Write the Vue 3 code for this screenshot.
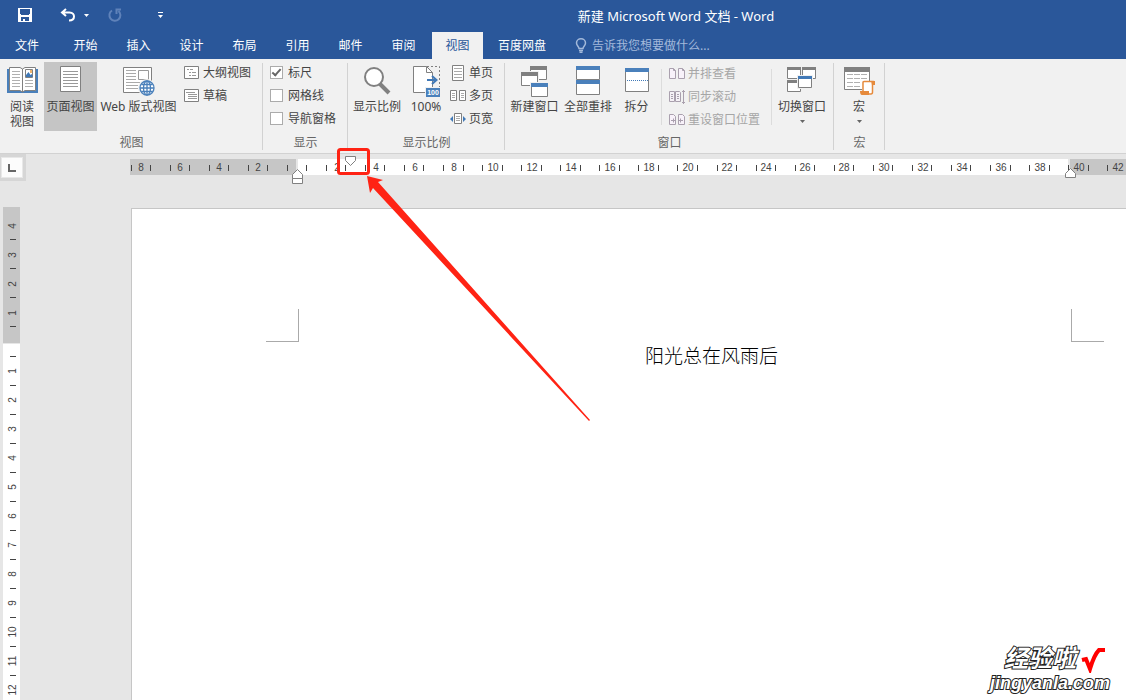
<script setup>
import { ref } from 'vue'

const tabs = ['开始', '插入', '设计', '布局', '引用', '邮件', '审阅', '视图', '百度网盘']
const activeTab = ref('视图')
const search = ref('')
const showOptions = ref([
  { id: 'ruler', label: '标尺', on: true },
  { id: 'grid', label: '网格线', on: false },
  { id: 'nav', label: '导航窗格', on: false },
])

// Horizontal ruler: labels every two characters, ticks half way between.
const ZERO_X = 167.5
const STEP_X = 39.07
const hMarks = []
const hTicks = []
const hLast = Math.floor((window.innerWidth - 130 - ZERO_X - 6) / STEP_X)
for (let i = -4; i <= hLast; i++) {
  if (i !== 0) hMarks.push({ x: Math.round(ZERO_X + i * STEP_X), label: Math.abs(i * 2) })
  for (const side of [-0.25, 0.25]) hTicks.push(Math.floor(ZERO_X + (i + side) * STEP_X - 0.5))
}
hTicks[0] = 1

// Vertical ruler: labels every unit.
const ZERO_Y = 135
const STEP_Y = 29
const vMarks = []
const vTicks = []
const vLast = Math.floor((window.innerHeight - 207 - ZERO_Y - 6) / STEP_Y)
for (let i = -4; i <= vLast; i++) {
  if (i !== 0) vMarks.push({ y: Math.round(ZERO_Y + i * STEP_Y), label: Math.abs(i) })
  const y = ZERO_Y + (i - 0.5) * STEP_Y - 1
  if (i !== -4) vTicks.push(i > 0 ? Math.ceil(y) : Math.floor(y))
}
</script>

<template>
  <div class="app">
    <header class="top">
      <div class="titlebar">
        <div class="quick">
          <button class="q-save" aria-label="保存">
            <svg width="14" height="14" viewBox="0 0 14 14" shape-rendering="crispEdges">
              <path fill="#fff" fill-rule="evenodd" d="M0 0h14v14H0zM2 1v5h1v1h8V6h1V1zM3 9v4h2v-2h2v2h4V9z" />
            </svg>
          </button>
          <button class="q-undo" aria-label="撤消">
            <svg width="16" height="14" viewBox="0 0 16 14" fill="none" stroke="#fff" stroke-width="2">
              <path d="M6 1L2 4.500L6 8M2.500 4.500H9.500C13 4.500 14 7 14 8.500C14 11 12 12.500 9 12.500" />
            </svg>
          </button>
          <button class="q-more" aria-label="撤消列表">
            <svg width="5" height="3"><path d="M0 0h5L2.500 3z" fill="#fff" /></svg>
          </button>
          <button class="q-redo" aria-label="重复">
            <svg width="14" height="14" viewBox="0 0 14 14" fill="none" stroke="#5f82b9" stroke-width="2">
              <path d="M4 2.500A5.500 5.500 0 1 0 10.500 3M8.500 6V1.500H13" />
            </svg>
          </button>
          <button class="q-custom" aria-label="自定义快速访问工具栏">
            <svg width="5" height="6"><path d="M0 0h5v1H0zM0 3h5L2.500 6z" fill="#fff" /></svg>
          </button>
        </div>
        <h1 class="title">新建 Microsoft Word 文档 - Word</h1>
      </div>
      <nav class="tabs">
        <button class="tab file">文件</button>
        <button
          v-for="tab in tabs"
          :key="tab"
          class="tab"
          :class="{ active: tab === activeTab, wide: tab.length > 2 }"
          @click="activeTab = tab"
        >{{ tab }}</button>
        <label class="tell">
          <svg width="12" height="15" viewBox="0 0 12 15" fill="none" stroke="#a3b9da" stroke-width="1.500">
            <path d="M4 10.500C4 8.500 1.500 7.800 1.500 5A4.500 4.200 0 0 1 10.500 5C10.500 7.800 8 8.500 8 10.500zM4 12.500H8M4.500 14.200H7.500" />
          </svg>
          <input v-model="search" type="text" aria-label="告诉我您想要做什么" placeholder="告诉我您想要做什么..." />
        </label>
      </nav>
    </header>

    <section class="ribbon">
      <div class="group views">
        <div class="body">
          <button class="big read">
            <span class="pic">
              <svg width="31" height="27" viewBox="0 0 31 27">
                <path d="M0 3h31v24H0z" fill="#4a80bb" />
                <path d="M2.500 1.500H13L15.500 3L18 1.500H28.500V24.500H18L15.500 26L13 24.500H2.500z" fill="#fff" stroke="#808080" />
                <path d="M15.500 3V26" stroke="#808080" />
                <path d="M5 5.500h8M5 8.500h8M5 11.500h8M5 14.500h8M5 17.500h8M5 20.500h8M18 14.500h8M18 17.500h8M18 20.500h8" stroke="#b0b0b0" />
                <path d="M18.500 3.500h7v8h-7z" fill="#fff" stroke="#808080" />
                <path d="M19 11V9l2.500-3 2 3 1-1 1 1v2z" fill="#3f77b5" />
                <path d="M23 4h2v3h-2z" fill="#efb46c" />
              </svg>
            </span>
            <span>阅读<br />视图</span>
          </button>
          <button class="big pageview selected">
            <span class="pic">
              <svg width="21" height="27" viewBox="0 0 21 27">
                <path d="M.5 .5h20v25H.5z" fill="#fff" stroke="#808080" />
                <path d="M3 5.500h15M3 8.500h15M3 11.500h15M3 14.500h15M3 17.500h15M3 20.500h15" stroke="#999" />
              </svg>
            </span>
            <span>页面视图</span>
          </button>
          <button class="big web">
            <span class="pic">
              <svg width="32" height="30" viewBox="0 0 32 30">
                <path d="M.5 1.500h28v25H.5z" fill="#fff" stroke="#808080" />
                <path d="M3 4.500h10M3 7.500h10M3 10.500h10M3 13.500h10M3 16.500h14M3 19.500h12M3 22.500h12" stroke="#aaa" />
                <path d="M15.500 4.500h10v9h-10z" fill="#fff" stroke="#999" />
                <circle cx="24" cy="22" r="9" fill="#f1f1f1" />
                <g fill="#fff" stroke="#4a80bb" stroke-width="1.300">
                  <circle cx="24" cy="22" r="7" />
                  <ellipse cx="24" cy="22" rx="3.500" ry="7" />
                  <path d="M24 15v14M17 22h14M18.500 18.500h11M18.500 25.500h11" />
                </g>
              </svg>
            </span>
            <span>Web 版式视图</span>
          </button>
          <div class="list">
            <button class="small">
              <svg width="16" height="13" viewBox="0 0 16 13" fill="none">
                <path d="M.5 .5h14v12H.5z" fill="#fff" stroke="#808080" />
                <path d="M3 3.500h2M6 3.500h3M5 6.500h2M8 6.500h4M5 9.500h2M8 9.500h4" stroke="#999" />
              </svg>大纲视图
            </button>
            <button class="small">
              <svg width="16" height="13" viewBox="0 0 16 13" fill="none">
                <path d="M.5 .5h14v12H.5z" fill="#fff" stroke="#808080" />
                <path d="M2 3.500h9M4 5.500h9M4 7.500h9M4 9.500h9" stroke="#999" />
              </svg>草稿
            </button>
          </div>
        </div>
        <div class="caption">视图</div>
      </div>

      <div class="group show">
        <div class="body">
          <div class="list">
            <label v-for="opt in showOptions" :key="opt.id" class="check">
              <input v-model="opt.on" type="checkbox" />{{ opt.label }}
            </label>
          </div>
        </div>
        <div class="caption">显示</div>
      </div>

      <div class="group zoom">
        <div class="body">
          <button class="big zoombtn">
            <span class="pic">
              <svg width="28" height="29" viewBox="0 0 28 29">
                <path d="M16 17L26 27" stroke="#808080" stroke-width="4" />
                <circle cx="11" cy="11" r="9" fill="#fff" stroke="#808080" stroke-width="2" />
              </svg>
            </span>
            <span>显示比例</span>
          </button>
          <button class="big hundred">
            <span class="pic">
              <svg width="27" height="32" viewBox="0 0 27 32">
                <path d="M14 .5h12.500V22" fill="none" stroke="#808080" stroke-dasharray="2 2" />
                <path d="M.5 .5h13l6 6v20H.5z" fill="#fff" stroke="#808080" />
                <path d="M13.500 .5v6h6" fill="none" stroke="#808080" />
                <path d="M14 14h9M19 10l4.500 4L19 18" fill="none" stroke="#4179b7" stroke-width="2" />
                <path d="M12 21h15v11H12z" fill="#f1f1f1" />
                <path d="M13 22h14v9H13z" fill="#4a80bb" />
                <text x="20" y="29" class="badge">100</text>
              </svg>
            </span>
            <span>100%</span>
          </button>
          <div class="list">
            <button class="small">
              <svg width="16" height="16" viewBox="0 0 16 16">
                <path d="M2.500 .5h11v15h-11z" fill="#fff" stroke="#808080" />
                <path d="M4 3.500h8M4 6.500h8M4 9.500h8M4 12.500h8" stroke="#aaa" />
              </svg>单页
            </button>
            <button class="small">
              <svg width="16" height="12" viewBox="0 0 16 12">
                <path d="M.5 .5h6v10h-6zM9.500 .5h6v10h-6z" fill="#fff" stroke="#808080" />
                <path d="M2 3.500h3M2 5.500h3M2 7.500h3M11 3.500h3M11 5.500h3M11 7.500h3" stroke="#aaa" />
              </svg>多页
            </button>
            <button class="small">
              <svg width="16" height="12" viewBox="0 0 16 12">
                <path d="M4.500 .5h7v10h-7z" fill="#fff" stroke="#808080" />
                <path d="M6 3.500h4M6 5.500h4M6 7.500h4" stroke="#aaa" />
                <path d="M3 3v6L0 6zM13 3v6l3-3z" fill="#4179b7" />
              </svg>页宽
            </button>
          </div>
        </div>
        <div class="caption">显示比例</div>
      </div>

      <div class="group window">
        <div class="body">
          <button class="big newwin">
            <span class="pic">
              <svg width="28" height="32" viewBox="0 0 28 32">
                <path d="M9.500 .5h16v13h-16z" fill="#fff" stroke="#808080" /><path d="M9 0h17v4H9z" fill="#808080" />
                <path d="M0 5h18v15H0z" fill="#f1f1f1" />
                <path d="M.5 6.500h16v13H.5z" fill="#fff" stroke="#808080" /><path d="M0 6h17v4H0z" fill="#808080" />
                <path d="M9 16h18v4H9z" fill="#f1f1f1" />
                <path d="M10.500 17.500h16v13h-16z" fill="#fff" stroke="#808080" /><path d="M10 17h17v4H10z" fill="#4a80bb" />
              </svg>
            </span>
            <span>新建窗口</span>
          </button>
          <button class="big arrange">
            <span class="pic">
              <svg width="24" height="30" viewBox="0 0 24 30">
                <path d="M.5 .5h23v13H.5zM.5 15.500h23v13H.5z" fill="#fff" stroke="#808080" />
                <path d="M0 0h24v4H0zM0 14h24v4H0z" fill="#4a80bb" />
              </svg>
            </span>
            <span>全部重排</span>
          </button>
          <button class="big split">
            <span class="pic">
              <svg width="24" height="26" viewBox="0 0 24 26">
                <path d="M.5 2.500h23v23H.5z" fill="#fff" stroke="#808080" />
                <path d="M0 2h24v4H0z" fill="#4a80bb" />
                <path d="M2 14.500h21" stroke="#4179b7" stroke-dasharray="1 1" />
              </svg>
            </span>
            <span>拆分</span>
          </button>
          <div class="list off">
            <button class="small" disabled>
              <svg width="16" height="12" viewBox="0 0 16 12" fill="#f8f2fa" stroke="#aaa0ae">
                <path d="M.5 .5h4l2 2v8h-6zM9.500 .5h4l2 2v8h-6zM4.500 .5v2h2M13.500 .5v2h2" />
              </svg>并排查看
            </button>
            <button class="small" disabled>
              <svg width="16" height="14" viewBox="0 0 16 14" fill="#f5f1f6" stroke="#aaa0ae">
                <path d="M.5 1.500h5v10h-5zM6.500 1.500h4l1 1v9h-5zM2 4.500h2M2 6.500h2M2 8.500h2M8 4.500h2M8 6.500h2M8 8.500h2M14.500 0v14M13 2l1.500-1.500L16 2M13 12l1.500 1.500L16 12" />
              </svg>同步滚动
            </button>
            <button class="small" disabled>
              <svg width="16" height="12" viewBox="0 0 16 12" fill="#f8f2fa" stroke="#aaa0ae">
                <path d="M.5 .5h4l2 2v8h-6zM9.500 .5h4l2 2v8h-6zM2 6.500h5M9 6.500h5M4.500 4.500v4M11.500 4.500v4" />
              </svg>重设窗口位置
            </button>
          </div>
          <button class="big switch">
            <span class="pic">
              <svg width="30" height="28" viewBox="0 0 30 28">
                <path d="M.5 1.500h13v11H.5zM15.500 1.500h13v11h-13zM.5 14.500h13v11H.5z" fill="#fff" stroke="#808080" />
                <path d="M0 1h14v3H0zM15 1h14v3H15zM0 14h14v3H0z" fill="#808080" />
                <path d="M10 9h16v14H10z" fill="#f1f1f1" />
                <path d="M11.500 10.500h13v11h-13z" fill="#fff" stroke="#808080" />
                <path d="M11 10h14v3H11z" fill="#4179b7" />
              </svg>
            </span>
            <span>切换窗口</span>
            <svg class="caret" width="5" height="3"><path d="M0 0h5L2.500 3z" fill="#666" /></svg>
          </button>
        </div>
        <div class="caption">窗口</div>
      </div>

      <div class="group macro">
        <div class="body">
          <button class="big macrobtn">
            <span class="pic">
              <svg width="31" height="29" viewBox="0 -1 31 29">
                <path d="M.5 .5h25v22H.5z" fill="#fff" stroke="#808080" />
                <path d="M0 0h26v5H0z" fill="#808080" />
                <path d="M3 7.500h6M10 7.500h6M17 7.500h6M3 11.500h6M10 11.500h6M17 11.500h6M3 15.500h6M10 15.500h6M3 19.500h6M10 19.500h6" stroke="#b0b0b0" />
                <path d="M18 14h13v4h-2v10H16v-5h2z" fill="#f1f1f1" />
                <path d="M19 25V15.500Q19 14.500 20 14.500H29.500Q30.500 14.500 30.500 17H28.500V25Q28.500 27 27 27H18" fill="#fff" stroke="#e68a3c" stroke-width="1.500" />
                <path d="M16 24h9v4h-7Q16 28 16 24zM27 14h4v4h-3z" fill="#e68a3c" />
              </svg>
            </span>
            <span>宏</span>
            <svg class="caret" width="5" height="3"><path d="M0 0h5L2.500 3z" fill="#666" /></svg>
          </button>
        </div>
        <div class="caption">宏</div>
      </div>
    </section>

    <main class="workspace">
      <div class="ruler-row">
        <div class="corner">
          <button class="tabstop" aria-label="左对齐制表符">
            <svg width="8" height="8"><path d="M0 0h2v6h6v2H0z" fill="#666" /></svg>
          </button>
        </div>
        <svg class="hruler">
          <rect x="0" y="5" width="166" height="16" fill="#c6c6c6" />
          <rect x="168" y="5" width="770" height="16" fill="#fff" />
          <rect x="940" y="5" width="100%" height="16" fill="#c6c6c6" />
          <rect v-for="x in hTicks" :key="'t' + x" :x="x" y="11" width="1" height="6" fill="#444" />
          <text v-for="m in hMarks" :key="'m' + m.x" :x="m.x" y="17" class="num">{{ m.label }}</text>
          <g fill="#fff" stroke="#808080">
            <path d="M162.500 24.500v-4l5-5 5 5v4zM162.500 24.500h10v5h-10z" />
            <path d="M215.500 2.500h10v4l-5 5-5-5z" />
            <path d="M935.500 23.500v-4l5-5 5 5v4z" />
          </g>
        </svg>
      </div>
      <div class="doc">
        <div class="vruler">
          <svg>
            <rect x="0" y="0" width="17" height="136" fill="#c6c6c6" />
            <rect x="0" y="137" width="17" height="100%" fill="#fff" />
            <rect v-for="y in vTicks" :key="'t' + y" x="7" :y="y" width="6" height="1" fill="#444" />
            <text
              v-for="m in vMarks"
              :key="'m' + m.y"
              :transform="`translate(13 ${m.y}) rotate(-90)`"
              class="num"
            >{{ m.label }}</text>
          </svg>
        </div>
        <article class="page">
          <div class="marks"><i class="mark left"></i><i class="mark right"></i></div>
          <p class="text">阳光总在风雨后</p>
        </article>
      </div>
    </main>

    <svg class="pointer" width="600" height="430" viewBox="0 0 600 430" fill="#ff2314">
      <rect x="338.500" y="149.500" width="30" height="24" rx="2" fill="none" stroke="#ff2314" stroke-width="3" />
      <path d="M367 176L383 180L378 182L590 420L589 421L373 188L370 193z" />
    </svg>
    <div class="watermark">
      <div class="brand">
        <span>经验啦</span>
        <svg width="25" height="26" viewBox="0 0 25 26" fill="none" stroke="#f00" stroke-width="4">
          <path d="M1 13L5 12L9 22Q13 8 18 3H24" />
        </svg>
      </div>
      <div class="site">jingyanla.com</div>
    </div>
  </div>
</template>

<style>
html,
body {
  margin: 0;
}
body {
  overflow: hidden;
}
</style>

<style scoped>
.app {
  position: relative;
  display: flex;
  flex-direction: column;
  height: 100vh;
  overflow: hidden;
  background: #e6e6e6;
  color: #444;
  font: 12px/15px "Noto Sans", "Noto Sans CJK SC", sans-serif;
}
button,
input {
  margin: 0;
  padding: 0;
  border: 0;
  background: none;
  color: inherit;
  font: inherit;
}
svg {
  display: block;
  flex: none;
}
.top {
  background: #2a579a;
  color: #fff;
}
.titlebar {
  display: flex;
  height: 32px;
}
.quick {
  display: flex;
  width: 226px;
  height: 30px;
}
.quick button {
  display: flex;
  align-items: center;
  justify-content: center;
}
.q-save { width: 50px; }
.quick .q-undo { width: 20px; margin-left: 8px; }
.q-more { width: 16px; }
.q-redo { width: 41px; }
.q-custom { width: 51px; }
.title {
  flex: 1;
  margin: 0;
  text-align: center;
  font-size: 13px;
  font-weight: 400;
  line-height: 32px;
}
.tabs {
  display: flex;
  height: 27px;
}
.tab {
  width: 53px;
  line-height: 25px;
  white-space: nowrap;
}
.tab.file { width: 54px; margin-right: 5px; }
.tab.wide { width: 78px; }
.tab.active {
  width: 51px;
  margin-left: 2px;
  background: #f1f1f1;
  color: #2a579a;
}
.tell {
  display: flex;
  align-items: center;
  gap: 5px;
  margin-left: 14px;
}
.tell input {
  width: 140px;
  outline: none;
}
.tell input::placeholder { color: #a3b9da; }

.ribbon {
  display: flex;
  padding: 2px 0 3px;
  border-bottom: 1px solid #d2d2d2;
  background: #f1f1f1;
}
.group {
  position: relative;
  display: flex;
  flex-direction: column;
  box-sizing: border-box;
}
.group::after {
  content: "";
  position: absolute;
  top: 2px;
  right: 0;
  bottom: 0;
  width: 1px;
  background: #d2d2d2;
}
.views { width: 263px; }
.show { width: 85px; }
.zoom { width: 157px; }
.window { width: 329px; }
.macro { width: 51px; }
.body {
  display: flex;
  height: 73px;
}
.caption {
  height: 16px;
  color: #666;
  line-height: 18px;
  text-align: center;
}
.big {
  display: flex;
  flex-direction: column;
  align-items: center;
  height: 69px;
  margin-top: 1px;
  white-space: nowrap;
}
.pic {
  display: flex;
  justify-content: center;
  height: 33px;
  padding-top: 4px;
}
.caret { margin-top: 6px; }
.read { width: 44px; }
.pageview { width: 53px; }
.web { width: 83px; }
.selected { background: #c5c5c5; }
.zoombtn { width: 58px; }
.hundred { width: 40px; }
.newwin { width: 59px; }
.arrange { width: 48px; }
.split { width: 49px; }
.switch { width: 60px; }
.macrobtn { width: 50px; }
.list {
  display: flex;
  flex-direction: column;
  padding-left: 4px;
}
.off {
  width: 102px;
  height: 56px;
  margin-top: 8px;
  padding-left: 7px;
  border: solid #dcdcdc;
  border-width: 0 1px;
  color: #a6a6a6;
}
.off .small:first-child { margin-top: -7px; }
.small,
.check {
  display: flex;
  align-items: center;
  gap: 3px;
  height: 23px;
  flex: none;
  white-space: nowrap;
}
.show .list { padding-left: 7px; }
.check { gap: 5px; }
.check input {
  appearance: none;
  display: grid;
  place-items: center;
  box-sizing: border-box;
  width: 13px;
  height: 13px;
  border: 1px solid #ababab;
  background: #fff;
}
.check input:checked::after {
  content: "";
  width: 7px;
  height: 3px;
  border: solid #666;
  border-width: 0 0 2px 2px;
  transform: translateY(-1px) rotate(-48deg);
}
.badge {
  fill: #fff;
  font: bold 7px "Liberation Sans", sans-serif;
  text-anchor: middle;
}

.workspace {
  display: flex;
  flex: 1;
  flex-direction: column;
}
.ruler-row {
  display: flex;
  height: 53px;
}
.corner {
  box-sizing: border-box;
  width: 26px;
  height: 27px;
  margin-right: 104px;
  padding: 3px 3px 3px 1px;
  background: #d6d6d6;
}
.tabstop {
  display: grid;
  place-items: center;
  box-sizing: border-box;
  width: 22px;
  height: 21px;
  border: 1px solid #e8e8e8;
  background: #fcfcfc;
}
.hruler {
  flex: 1;
  height: 32px;
  min-width: 0;
}
.num {
  fill: #444;
  font: 10px "Liberation Sans", sans-serif;
  text-anchor: middle;
}
.doc {
  display: flex;
  flex: 1;
}
.vruler {
  position: relative;
  width: 17px;
  margin: 0 111px 0 3px;
}
.vruler svg {
  position: absolute;
  width: 100%;
  height: 100%;
}
.page {
  flex: 1;
  margin-top: 1px;
  border: solid #c6c6c6;
  border-width: 1px 0 0 1px;
  background: #fff;
}
.marks {
  display: flex;
  justify-content: space-between;
  margin: 100px 22px 0 134px;
}
.mark {
  box-sizing: border-box;
  width: 33px;
  height: 33px;
  border: solid #aaa;
  border-width: 0 1px 1px 0;
}
.mark.right { border-width: 0 0 1px 1px; }
.text {
  margin: 0 54px 0 166px;
  color: #000;
  font-size: 19px;
  font-weight: 300;
  line-height: 29px;
  text-align: center;
  text-indent: 53px;
}
.pointer {
  position: absolute;
  top: 0;
  left: 0;
  pointer-events: none;
}
.watermark {
  position: absolute;
  right: 16px;
  bottom: 7px;
  color: #fff;
  font: bold 18px/20px "Liberation Sans", "Noto Sans CJK SC", sans-serif;
  -webkit-text-stroke: 2px #222;
  paint-order: stroke fill;
}
.brand {
  display: flex;
  gap: 5px;
  justify-content: flex-end;
  padding-right: 4px;
  font-size: 24px;
  font-style: italic;
  line-height: 24px;
}
.site { font-style: italic; }
</style>
